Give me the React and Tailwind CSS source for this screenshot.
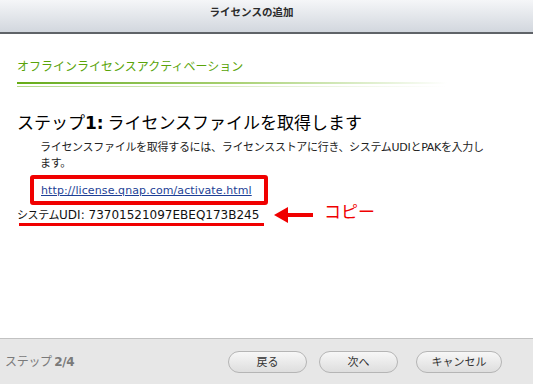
import React from "react";

const JP = "font-['Noto_Sans_CJK_JP','DejaVu_Sans',sans-serif]";
const LAT = "font-['DejaVu_Sans','Noto_Sans_CJK_JP',sans-serif]";

function Btn({ children, w = "w-[79px]" }) {
  return (
    <button
      className={`${w} ${JP} h-[22px] rounded-full border border-[#b5b5b5] bg-gradient-to-b from-[#f7f7f7] to-[#dedede] text-[11px] text-[#333] flex items-center justify-center leading-none`}
    >
      {children}
    </button>
  );
}

export default function App() {
  return (
    <div className={`w-[533px] h-[384px] bg-white flex flex-col overflow-hidden ${LAT}`}>
      {/* header */}
      <div className="h-[34px] shrink-0 bg-gradient-to-b from-[#f5f6f8] to-[#d2d7de] border-b-[2px] border-[#5f6368] flex justify-center pt-[4px] pr-[30px]">
        <span className={`text-[10.5px] font-bold text-[#2b2b2b] ${JP}`}>ライセンスの追加</span>
      </div>

      {/* body */}
      <div className="flex-1 flex flex-col pl-[17px] pt-[24px]">
        <div className={`text-[12px] leading-[16px] text-[#5aa40a] h-[16px] ${JP}`}>
          オフラインライセンスアクティベーション
        </div>
        <div className="mt-[8px] w-[430px] h-[2px] bg-gradient-to-r from-[#66ac12] via-[#a8d070] to-white" />
        <div className="mt-[2px] w-[430px] h-[1px] bg-gradient-to-r from-[#b4d98a] via-[#dcecc6] to-white" />

        <div className={`mt-[25px] text-[17px] leading-[20px] text-black whitespace-nowrap ${JP}`}>
          ステップ<span className={`${LAT} font-bold`}>1:</span> ライセンスファイルを取得します
        </div>

        <div className={`mt-[6px] ml-[23px] text-[11px] leading-[15px] text-[#222] whitespace-nowrap tracking-[-0.3px] ${JP}`}>
          ライセンスファイルを取得するには、ライセンスストアに行き、システム<span className={LAT}>UDI</span>と<span className={LAT}>PAK</span>を入力し
          <br />
          ます。
        </div>

        <div className="mt-[5px] ml-[13px] w-[238px] h-[30px] border-[4px] border-[#f00000] rounded-[3px] flex items-center pl-[7px] pt-[1px]">
          <a className="text-[11px] tracking-[0.1px] text-[#1d3f96] underline leading-none whitespace-nowrap font-['DejaVu_Sans',sans-serif]">
            http://license.qnap.com/activate.html
          </a>
        </div>

        <div className="flex items-start mt-[2px]">
          <div className="flex flex-col">
            <div className="text-[12px] leading-[14px] text-[#111] whitespace-nowrap">
              <span className={`${JP} text-[11px] tracking-[-0.4px]`}>システム</span>UDI: 73701521097EBEQ173B245
            </div>
            <div className="mt-[1px] ml-[2px] w-[245px] h-[3px] bg-[#f00000]" />
          </div>
          <svg width="40" height="18" viewBox="0 0 40 18" className="ml-[10px] -mt-[1px]">
            <polygon points="0,9 14,1 14,7 39,7 39,11 14,11 14,17" fill="#f00000" />
          </svg>
          <span className={`ml-[10px] -mt-[7px] text-[17px] leading-[22px] text-[#f00000] whitespace-nowrap ${JP}`}>
            コピー
          </span>
        </div>
      </div>

      {/* footer */}
      <div className="h-[46px] shrink-0 border-t border-[#c2c2c2] bg-[#e7e7e7] flex items-center">
        <span className={`ml-[5px] text-[12px] text-[#7a7a7a] whitespace-nowrap tracking-[-0.3px] ${JP}`}>
          ステップ <span className={`font-bold ${LAT}`}>2/4</span>
        </span>
        <div className="ml-auto mr-[31px] flex items-center">
          <Btn>戻る</Btn>
          <div className="ml-[12px]"><Btn>次へ</Btn></div>
          <div className="ml-[18px]"><Btn w="w-[86px]">キャンセル</Btn></div>
        </div>
      </div>
    </div>
  );
}
